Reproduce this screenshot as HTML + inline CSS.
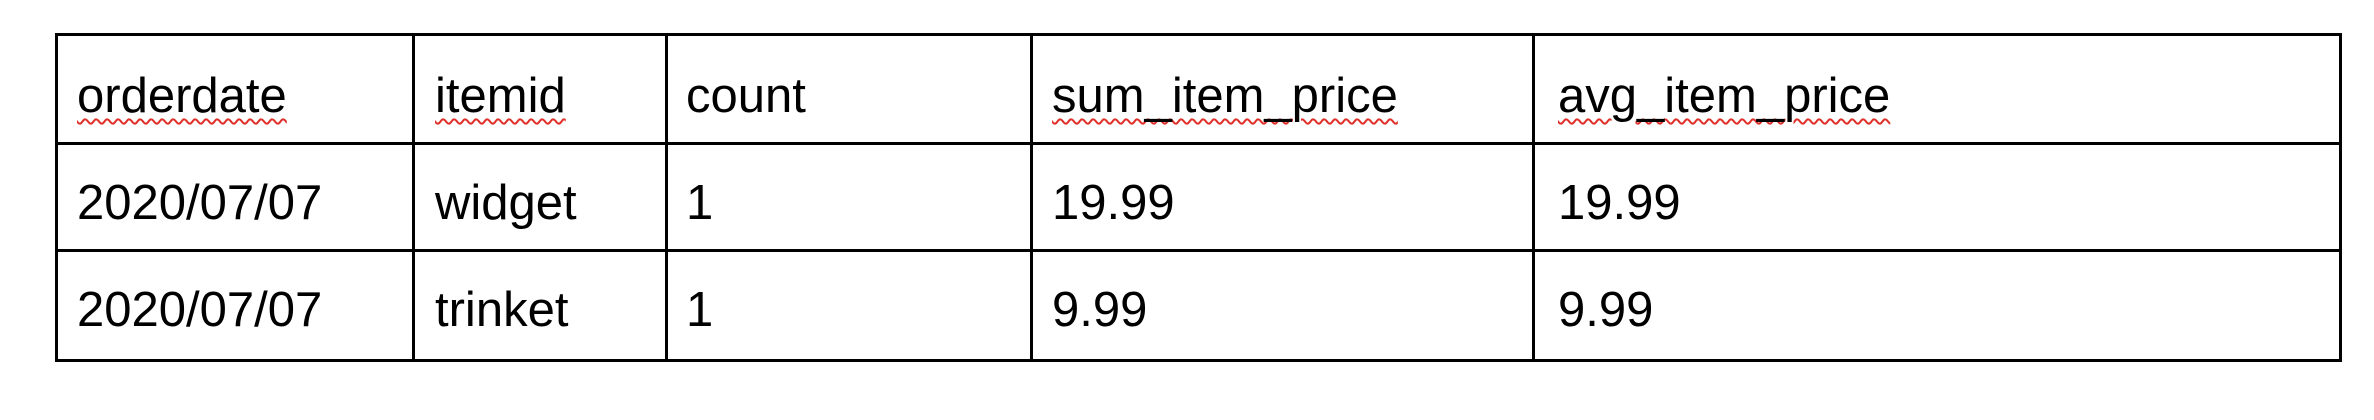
<!DOCTYPE html>
<html><head><meta charset="utf-8"><style>
html,body{margin:0;padding:0;background:#fff;width:2374px;height:420px;overflow:hidden}
.l{position:absolute;background:#000}
.t{position:absolute;font-family:"Liberation Sans",sans-serif;font-size:49px;color:#000;line-height:1;white-space:nowrap}
.u{text-decoration:underline wavy #e0302a;text-decoration-thickness:2px;text-underline-offset:6px}
</style></head><body>
<div class="l" style="left:55px;top:33px;width:2287px;height:3px"></div>
<div class="l" style="left:55px;top:142px;width:2287px;height:3px"></div>
<div class="l" style="left:55px;top:249px;width:2287px;height:3px"></div>
<div class="l" style="left:55px;top:359px;width:2287px;height:3px"></div>
<div class="l" style="left:55px;top:33px;width:3px;height:329px"></div>
<div class="l" style="left:412px;top:33px;width:3px;height:329px"></div>
<div class="l" style="left:665px;top:33px;width:3px;height:329px"></div>
<div class="l" style="left:1030px;top:33px;width:3px;height:329px"></div>
<div class="l" style="left:1532px;top:33px;width:3px;height:329px"></div>
<div class="l" style="left:2339px;top:33px;width:3px;height:329px"></div>

<div class="t u" style="left:77px;top:72px">orderdate</div>
<div class="t u" style="left:435px;top:72px">itemid</div>
<div class="t" style="left:686px;top:72px">count</div>
<div class="t u" style="left:1052px;top:72px">sum_item_price</div>
<div class="t u" style="left:1558px;top:72px">avg_item_price</div>

<div class="t" style="left:77px;top:179px">2020/07/07</div>
<div class="t" style="left:435px;top:179px">widget</div>
<div class="t" style="left:686px;top:179px">1</div>
<div class="t" style="left:1052px;top:179px">19.99</div>
<div class="t" style="left:1558px;top:179px">19.99</div>

<div class="t" style="left:77px;top:286px">2020/07/07</div>
<div class="t" style="left:435px;top:286px">trinket</div>
<div class="t" style="left:686px;top:286px">1</div>
<div class="t" style="left:1052px;top:286px">9.99</div>
<div class="t" style="left:1558px;top:286px">9.99</div>
</body></html>
